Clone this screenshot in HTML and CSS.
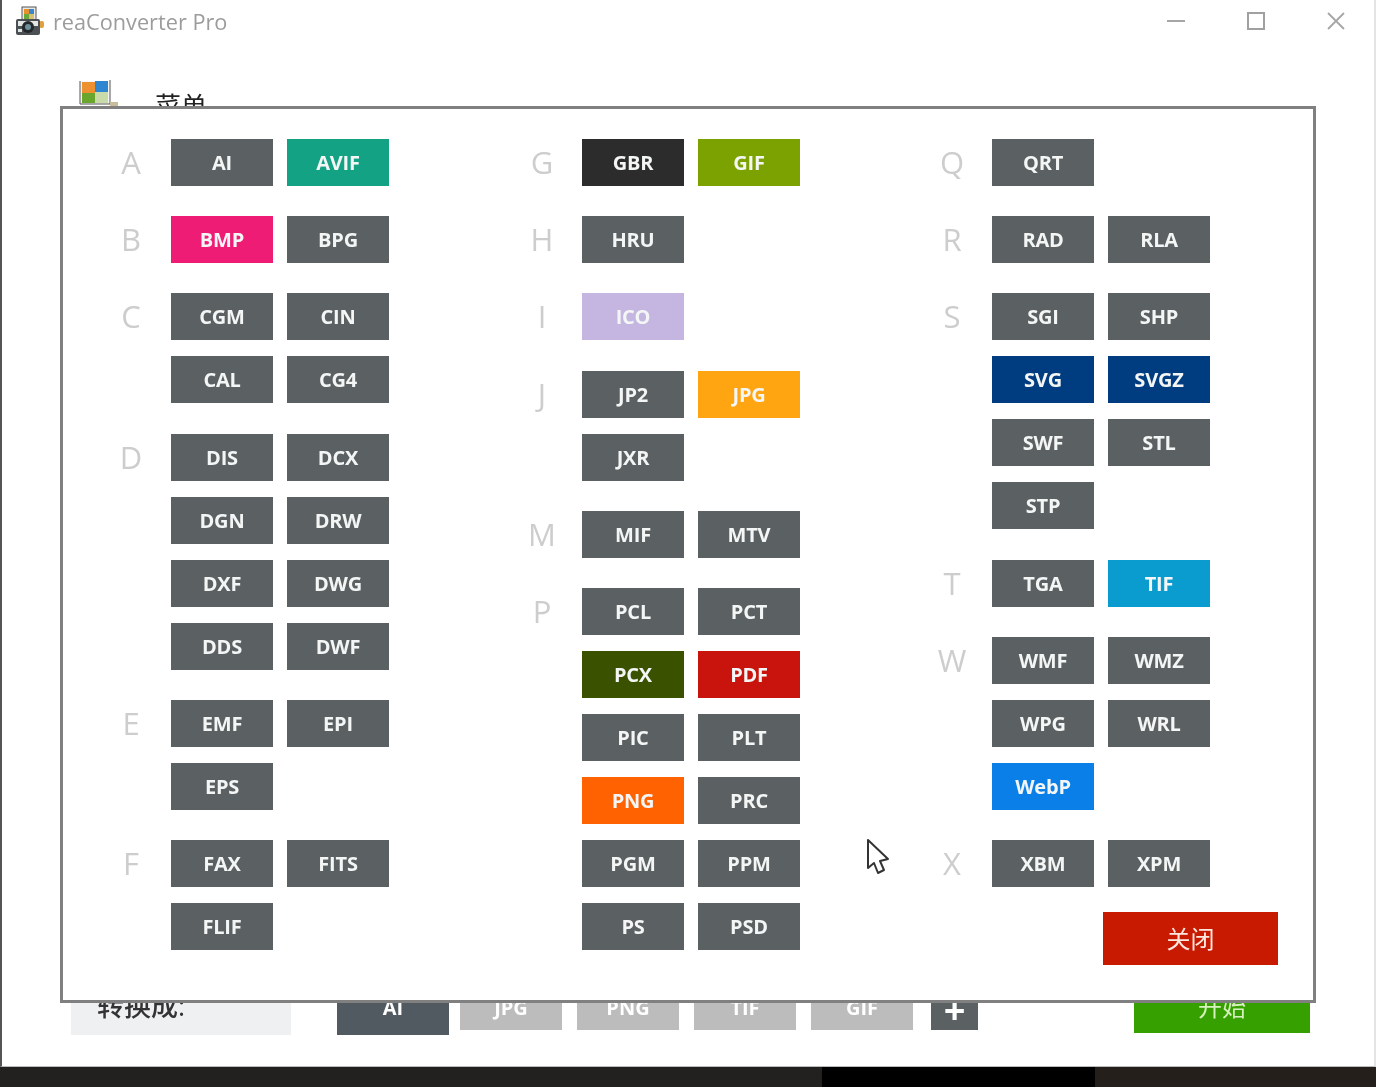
FILE: index.html
```html
<!DOCTYPE html>
<html lang="zh-CN">
<head>
    <meta charset="UTF-8">
    <meta name="viewport" content="width=device-width, initial-scale=1.0">
    <title>reaConverter Pro</title>
    <link rel="stylesheet" href="styles.css">
</head>
<body>
    <div class="window">
        <!-- title bar -->
        <div class="titlebar">
            <svg class="app-icon" width="30" height="30" viewBox="0 0 30 30">
                <rect x="7" y="1" width="14" height="14" fill="#e8e8e8" stroke="#555"/>
                <rect x="9" y="3" width="5" height="5" fill="#e8912a"/>
                <rect x="14" y="3" width="5" height="5" fill="#3a86c8"/>
                <rect x="9" y="8" width="5" height="6" fill="#6aa83a"/>
                <rect x="14" y="8" width="5" height="6" fill="#d8c070"/>
                <rect x="24" y="15" width="5" height="7" rx="2" fill="#e0a040"/>
                <rect x="1" y="13" width="24" height="16" rx="2" fill="#4a5054"/>
                <rect x="3" y="15" width="20" height="5" fill="#e4e6e6"/>
                <circle cx="13" cy="21" r="6" fill="#23282b"/>
                <circle cx="13" cy="21" r="3" fill="#6f8f9c"/>
                <rect x="3" y="23" width="4" height="3" fill="#dfe2e2"/>
            </svg>
            <span class="app-name">reaConverter Pro</span>
            <div class="win-buttons">
                <svg width="20" height="20" viewBox="0 0 20 20"><path d="M1 10H19" stroke="#a6a6a6" stroke-width="2"/></svg>
                <svg width="20" height="20" viewBox="0 0 20 20"><rect x="2" y="2" width="16" height="16" fill="none" stroke="#a0a0a0" stroke-width="2"/></svg>
                <svg width="20" height="20" viewBox="0 0 20 20"><path d="M2 2L18 18M18 2L2 18" stroke="#a6a6a6" stroke-width="1.8"/></svg>
            </div>
        </div>

        <!-- menu row, mostly behind the dialog -->
        <div class="menu-row">
            <svg width="42" height="28" viewBox="0 0 42 28">
                <rect x="2" y="3" width="30" height="23" fill="#f4f4f4"/>
                <rect x="4" y="4" width="13" height="11" fill="#ec9030"/>
                <rect x="17" y="3" width="13" height="11" fill="#2f86d0"/>
                <rect x="4" y="15" width="13" height="10" fill="#6aa62c"/>
                <rect x="17" y="14" width="13" height="11" fill="#c9dba8"/>
                <path d="M2 3V26H32V2" fill="none" stroke="#555" stroke-width="1"/>
                <path d="M32 24H40V28H32Z" fill="#c8bd9a"/>
            </svg>
            <span class="menu-label">菜单</span>
        </div>

        <div class="spacer"></div>

        <!-- bottom bar, also partly covered -->
        <div class="bottom-bar">
            <div class="target-label">转换成:</div>
            <div class="target target-active">AI</div>
            <div class="target target-first">JPG</div>
            <div class="target">PNG</div>
            <div class="target">TIF</div>
            <div class="target">GIF</div>
            <div class="target-add">+</div>
            <div class="start-button">开始</div>
        </div>
    </div>

    <div class="taskbar">
        <div class="task-left"></div>
        <div class="task-mid"></div>
        <div class="task-right"></div>
    </div>

    <!-- format dialog -->
    <div class="dialog">
        <div class="dialog-col">
            <div class="group"><div class="letter">A</div><div class="formats">
                <div class="fmt">AI</div><div class="fmt c-avif">AVIF</div>
            </div></div>
            <div class="group"><div class="letter">B</div><div class="formats">
                <div class="fmt c-bmp">BMP</div><div class="fmt">BPG</div>
            </div></div>
            <div class="group"><div class="letter">C</div><div class="formats">
                <div class="fmt">CGM</div><div class="fmt">CIN</div>
                <div class="fmt">CAL</div><div class="fmt">CG4</div>
            </div></div>
            <div class="group"><div class="letter">D</div><div class="formats">
                <div class="fmt">DIS</div><div class="fmt">DCX</div>
                <div class="fmt">DGN</div><div class="fmt">DRW</div>
                <div class="fmt">DXF</div><div class="fmt">DWG</div>
                <div class="fmt">DDS</div><div class="fmt">DWF</div>
            </div></div>
            <div class="group"><div class="letter">E</div><div class="formats">
                <div class="fmt">EMF</div><div class="fmt">EPI</div>
                <div class="fmt">EPS</div>
            </div></div>
            <div class="group"><div class="letter">F</div><div class="formats">
                <div class="fmt">FAX</div><div class="fmt">FITS</div>
                <div class="fmt">FLIF</div>
            </div></div>
        </div>

        <div class="dialog-col">
            <div class="group"><div class="letter">G</div><div class="formats">
                <div class="fmt c-gbr">GBR</div><div class="fmt c-gif">GIF</div>
            </div></div>
            <div class="group"><div class="letter">H</div><div class="formats">
                <div class="fmt">HRU</div>
            </div></div>
            <div class="group"><div class="letter">I</div><div class="formats">
                <div class="fmt c-ico">ICO</div>
            </div></div>
            <div class="group"><div class="letter">J</div><div class="formats">
                <div class="fmt">JP2</div><div class="fmt c-jpg">JPG</div>
                <div class="fmt">JXR</div>
            </div></div>
            <div class="group"><div class="letter">M</div><div class="formats">
                <div class="fmt">MIF</div><div class="fmt">MTV</div>
            </div></div>
            <div class="group"><div class="letter">P</div><div class="formats">
                <div class="fmt">PCL</div><div class="fmt">PCT</div>
                <div class="fmt c-pcx">PCX</div><div class="fmt c-pdf">PDF</div>
                <div class="fmt">PIC</div><div class="fmt">PLT</div>
                <div class="fmt c-png">PNG</div><div class="fmt">PRC</div>
                <div class="fmt">PGM</div><div class="fmt">PPM</div>
                <div class="fmt">PS</div><div class="fmt">PSD</div>
            </div></div>
        </div>

        <div class="dialog-col">
            <div class="group"><div class="letter">Q</div><div class="formats">
                <div class="fmt">QRT</div>
            </div></div>
            <div class="group"><div class="letter">R</div><div class="formats">
                <div class="fmt">RAD</div><div class="fmt">RLA</div>
            </div></div>
            <div class="group"><div class="letter">S</div><div class="formats">
                <div class="fmt">SGI</div><div class="fmt">SHP</div>
                <div class="fmt c-svg">SVG</div><div class="fmt c-svg">SVGZ</div>
                <div class="fmt">SWF</div><div class="fmt">STL</div>
                <div class="fmt">STP</div>
            </div></div>
            <div class="group"><div class="letter">T</div><div class="formats">
                <div class="fmt">TGA</div><div class="fmt c-tif">TIF</div>
            </div></div>
            <div class="group"><div class="letter">W</div><div class="formats">
                <div class="fmt">WMF</div><div class="fmt">WMZ</div>
                <div class="fmt">WPG</div><div class="fmt">WRL</div>
                <div class="fmt c-webp">WebP</div>
            </div></div>
            <div class="group"><div class="letter">X</div><div class="formats">
                <div class="fmt">XBM</div><div class="fmt">XPM</div>
            </div></div>
            <div class="close-button">关闭</div>
        </div>
    </div>

    <!-- mouse pointer from the recording -->
    <svg class="pointer" width="24" height="38" viewBox="0 0 24 38">
        <path d="M2 2L2 30L8 25L12 35L18 32L14 23L22 21Z" fill="#fff" stroke="#333" stroke-width="2" stroke-linejoin="round"/>
    </svg>
</body>
</html>
```

FILE: styles.css
```css
* {
    box-sizing: border-box;
}
html, body {
    margin: 0;
    height: 1087px;
    overflow: hidden;
}
body {
    position: relative;
    font-family: "Open Sans", "Noto Sans CJK SC", sans-serif;
    background-color: #fff;
    filter: blur(0.7px);
}

/* window behind the dialog */
.window {
    display: flex;
    flex-direction: column;
    height: 1067px;
    border-left: 2px solid #555;
    border-right: 2px solid #e4e4e4;
    border-bottom: 1px solid #bbb;
}
.titlebar {
    display: flex;
    align-items: center;
    height: 42px;
    padding-left: 13px;
}
.app-name {
    margin-left: 8px;
    font-size: 21.7px;
    color: #9c9c9c;
}
.win-buttons {
    display: flex;
    gap: 60px;
    margin-left: auto;
    margin-right: 28px;
}
.menu-row {
    display: flex;
    align-items: flex-start;
    height: 64px;
    padding-top: 36px;
    padding-left: 76px;
}
.menu-label {
    margin-left: 35px;
    margin-top: 11px;
    font-size: 26px;
    line-height: 34px;
    color: #222;
}
.spacer {
    flex: 1;
}
.bottom-bar {
    display: flex;
    align-items: center;
    height: 54px;
    margin-bottom: 31px;
    padding-left: 69px;
}
.target-label {
    width: 220px;
    height: 53px;
    padding-left: 26px;
    font-size: 27px;
    line-height: 48px;
    font-weight: 500;
    color: #333;
    background-color: #eef0f2;
}
.target {
    width: 102px;
    height: 44px;
    margin-left: 15px;
    text-align: center;
    font-size: 20px;
    font-weight: 700;
    line-height: 44px;
    color: #fff;
    background-color: #bcbcbc;
}
.target-active {
    width: 112px;
    height: 54px;
    margin-left: 46px;
    line-height: 54px;
    background-color: #505a60;
}
.target-first {
    margin-left: 11px;
}
.target-add {
    width: 47px;
    height: 44px;
    margin-left: 18px;
    text-align: center;
    font-size: 38px;
    font-weight: 700;
    line-height: 47px;
    color: #fff;
    background-color: #5b6062;
}
.start-button {
    width: 176px;
    height: 50px;
    margin-left: 156px;
    text-align: center;
    font-size: 24px;
    line-height: 48px;
    color: #d8f0c0;
    background-color: #36a000;
}
.taskbar {
    display: flex;
    height: 20px;
}
.task-left {
    width: 822px;
    background-color: #23211f;
}
.task-mid {
    width: 273px;
    background-color: #000;
}
.task-right {
    flex: 1;
    background-color: #241f1a;
}

/* format dialog */
.dialog {
    position: absolute;
    left: 60px;
    top: 106px;
    width: 1256px;
    height: 897px;
    display: grid;
    grid-template-columns: 411px 410px 1fr;
    padding: 30px 0 0 48px;
    background-color: #fff;
    border: 3px solid #808080;
}
.dialog-col {
    display: flex;
    flex-direction: column;
    gap: 30.2px;
}
.group {
    display: flex;
}
.letter {
    width: 40px;
    height: 47px;
    margin-right: 20px;
    text-align: center;
    font-size: 31px;
    font-weight: 400;
    line-height: 47px;
    color: #cdcdcd;
}
.formats {
    display: grid;
    grid-template-columns: 102px 102px;
    grid-auto-rows: 47px;
    gap: 16px 14px;
}
.fmt {
    text-align: center;
    font-size: 20px;
    font-weight: 700;
    line-height: 47px;
    letter-spacing: -0.2px;
    color: #f4f6f6;
    background-color: #5b6062;
}
.c-avif { background-color: #13a384; }
.c-bmp { background-color: #ee1c74; }
.c-gbr { background-color: #2c2c2c; }
.c-gif { background-color: #7ba200; }
.c-ico { background-color: #c4b6e0; }
.c-jpg { background-color: #ffa512; }
.c-svg { background-color: #003d80; }
.c-pcx { background-color: #3a5200; }
.c-pdf { background-color: #c8140c; }
.c-png { background-color: #ff6200; }
.c-tif { background-color: #0a9cce; }
.c-webp { background-color: #0a7fe8; }
.close-button {
    width: 175px;
    height: 53px;
    margin-top: -5px;
    margin-left: 171px;
    text-align: center;
    font-size: 24px;
    line-height: 53px;
    color: #fde8e0;
    background-color: #c81a00;
}
.pointer {
    position: absolute;
    left: 866px;
    top: 838px;
}
```
